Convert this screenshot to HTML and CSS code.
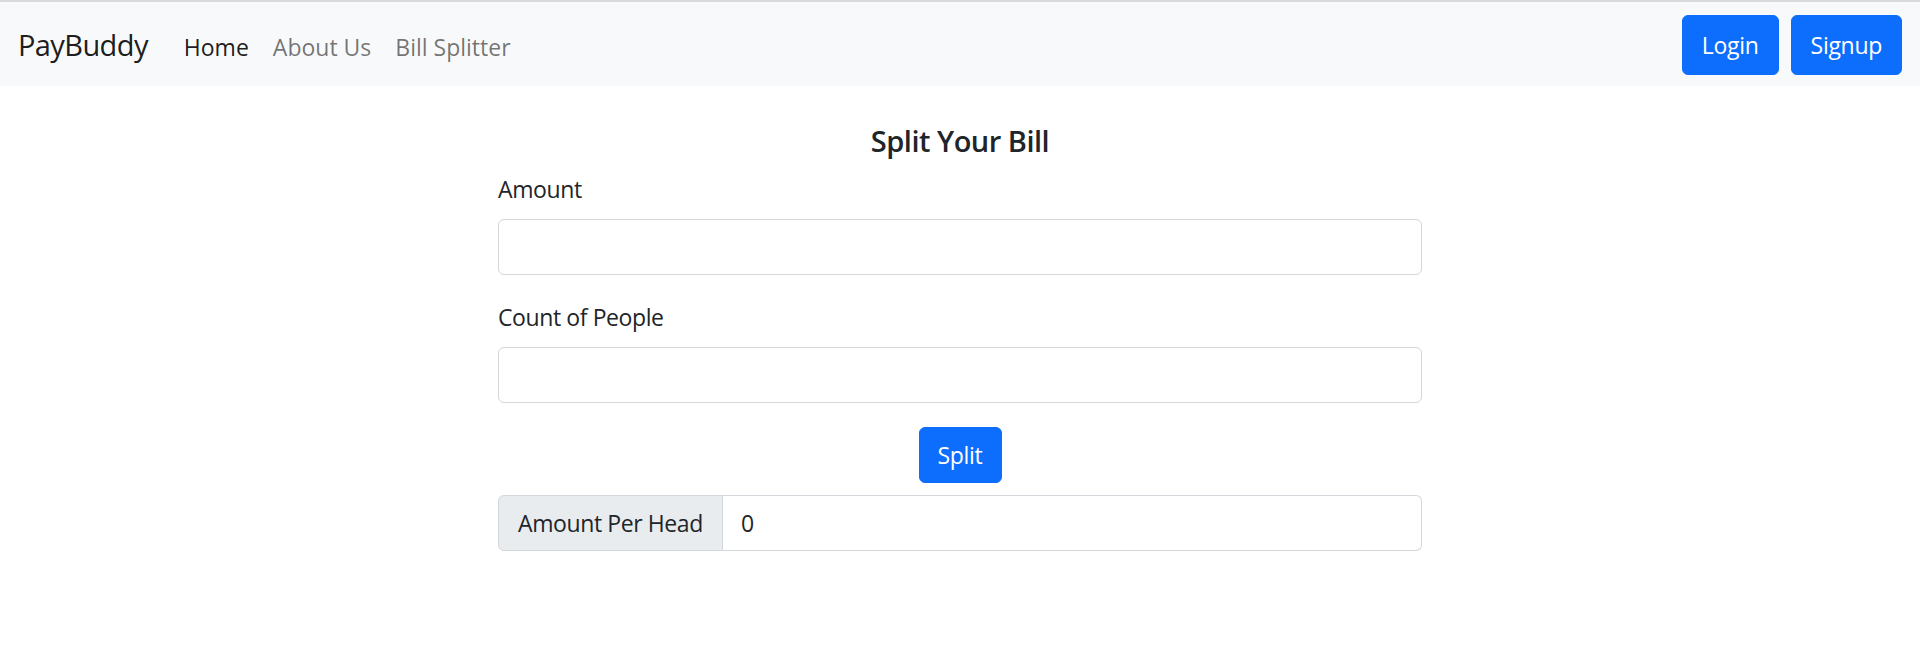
FILE: index.html
```html
<!DOCTYPE html>
<html lang="en">
<head>
<meta charset="utf-8">
<title>PayBuddy - Bill Splitter</title>
<link rel="stylesheet" href="styles.css">
</head>
<body>
<nav class="navbar">
  <a class="brand" href="#">PayBuddy</a>
  <ul class="nav-links">
    <li><a class="nav-link active" href="#">Home</a></li>
    <li><a class="nav-link" href="#">About Us</a></li>
    <li><a class="nav-link" href="#">Bill Splitter</a></li>
  </ul>
  <div class="auth">
    <button class="btn btn-nav">Login</button>
    <button class="btn btn-nav">Signup</button>
  </div>
</nav>
<main class="container">
  <h5 class="title">Split Your Bill</h5>
  <form class="split-form">
    <div class="field">
      <label class="form-label" for="amount">Amount</label>
      <input class="form-control" id="amount" type="text">
    </div>
    <div class="field">
      <label class="form-label" for="count">Count of People</label>
      <input class="form-control" id="count" type="text">
    </div>
    <div class="actions">
      <button type="button" class="btn btn-split">Split</button>
    </div>
    <div class="input-group">
      <span class="addon">Amount Per Head</span>
      <input class="form-control group-control" type="text" value="0" readonly>
    </div>
  </form>
</main>
</body>
</html>
```

FILE: styles.css
```css
* {
  box-sizing: border-box;
}

html, body {
  margin: 0;
  padding: 0;
  background: #ffffff;
}

body {
  font-family: "Open Sans", "Noto Sans", sans-serif;
  font-size: 24px;
  line-height: 1.5;
  color: #212529;
}

.navbar {
  display: flex;
  align-items: center;
  height: 86px;
  padding: 0 18px;
  background: #f8f9fa;
  border-top: 2px solid #d9dadb;
}

.brand {
  font-size: 29px;
  color: rgba(0, 0, 0, 0.9);
  text-decoration: none;
  margin-right: 24px;
  letter-spacing: -0.6px;
  line-height: 1.5;
  padding-top: 2px;
}

.nav-links {
  display: flex;
  list-style: none;
  margin: 0;
  padding: 0;
}

.nav-link {
  display: block;
  padding: 15px 12px 9px;
  color: rgba(0, 0, 0, 0.55);
  text-decoration: none;
  font-size: 23px;
  letter-spacing: 0;
}

.nav-link.active {
  color: rgba(0, 0, 0, 0.9);
}

.auth {
  margin-left: auto;
  display: flex;
  gap: 12px;
  padding-top: 2px;
}

.btn {
  font-family: inherit;
  font-size: 23px;
  letter-spacing: -0.3px;
  line-height: 36px;
  color: #ffffff;
  background: #0d6efd;
  border: 1px solid #0d6efd;
  border-radius: 6px;
  cursor: pointer;
}

.btn-nav {
  height: 60px;
  padding: 0 19px;
}

.container {
  width: 924px;
  margin: 0 auto;
}

.title {
  margin: 37px 0 12px;
  font-size: 29px;
  font-weight: 600;
  line-height: 36px;
  text-align: center;
  letter-spacing: -0.5px;
}

.split-form {
  margin: 0;
}

.field {
  margin-bottom: 24px;
}

.form-label {
  display: block;
  margin-bottom: 12px;
  font-size: 23px;
  letter-spacing: -0.4px;
  line-height: 36px;
}

.form-control {
  display: block;
  width: 100%;
  height: 56px;
  padding: 9px 18px;
  font-family: inherit;
  font-size: 23px;
  line-height: 36px;
  color: #212529;
  background: #ffffff;
  border: 1px solid #d3d6da;
  border-radius: 6px;
  outline: none;
}

.actions {
  display: flex;
  justify-content: center;
}

.btn-split {
  height: 56px;
  padding: 0 18px;
}

.input-group {
  display: flex;
  margin-top: 12px;
  height: 56px;
}

.addon {
  display: flex;
  align-items: center;
  padding: 0 19px;
  background: #e9ecef;
  border: 1px solid #d3d6da;
  border-radius: 6px 0 0 6px;
  font-size: 23px;
  letter-spacing: -0.4px;
  white-space: nowrap;
}

.group-control {
  flex: 1;
  width: auto;
  border-left: none;
  border-radius: 0 6px 6px 0;
}
```
